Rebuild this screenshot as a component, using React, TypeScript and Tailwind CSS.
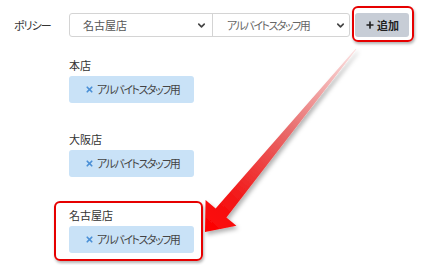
import { ChevronDown, Plus, X } from "lucide-react";

const FONT = "font-['Noto_Sans_CJK_JP','Noto_Sans',sans-serif] [font-feature-settings:'palt']";

function Tag({ label }: { label: string }) {
  return (
    <div className="flex h-[27px] w-[125px] items-center whitespace-nowrap rounded-[3px] bg-[#c9e2f7] pl-[16px] text-[11px] text-[#444]">
      <X className="mr-[3px] h-[9px] w-[9px] shrink-0 text-[#4a8fd6]" strokeWidth={4.5} />
      <span className="tracking-[-1.5px]">{label}</span>
    </div>
  );
}

function Section({ shop, mt }: { shop: string; mt: string }) {
  return (
    <div className={mt}>
      <div className="h-[16px] text-[11px] leading-[16px] text-[#333]">{shop}</div>
      <div className="mt-[3px]">
        <Tag label="アルバイトスタッフ用" />
      </div>
    </div>
  );
}

export default function App() {
  return (
    <div className={`relative h-[265px] w-[424px] overflow-hidden bg-white ${FONT}`}>
      <div className="flex items-center pl-[14px] pt-[13px]">
        <div className="w-[55px] text-[11px] tracking-[-1px] text-[#333]">ポリシー</div>
        <div className="flex h-[24px] w-[281px] rounded-[3px] border border-[#d4d4d4]">
          <div className="flex w-[143px] items-center justify-between border-r border-[#d4d4d4] pl-[13px] pr-[5px] text-[11px] text-[#555]">
            <span>名古屋店</span>
            <ChevronDown className="h-[11px] w-[11px] text-[#444]" strokeWidth={3.5} />
          </div>
          <div className="flex flex-1 items-center justify-between whitespace-nowrap pl-[14px] pr-[3px] text-[11px] text-[#666]">
            <span className="tracking-[-1.5px]">アルバイトスタッフ用</span>
            <ChevronDown className="h-[11px] w-[11px] text-[#444]" strokeWidth={3.5} />
          </div>
        </div>
        <button className="ml-[5px] flex h-[24px] w-[54px] items-center justify-center gap-[2px] rounded-[3px] bg-[#c7cdd6] text-[11px] font-bold text-[#222]">
          <Plus className="h-[10px] w-[10px]" strokeWidth={4} />
          <span>追加</span>
        </button>
      </div>

      <div className="pl-[69px]">
        <Section shop="本店" mt="mt-[20px]" />
        <Section shop="大阪店" mt="mt-[28px]" />
        <Section shop="名古屋店" mt="mt-[30px]" />
      </div>

      {/* annotations */}
      <div className="pointer-events-none absolute left-[352px] top-[6px] h-[36px] w-[62px] rounded-[6px] border-2 border-[#e60000] shadow-[1px_2px_3px_rgba(0,0,0,0.3)]" />
      <div className="pointer-events-none absolute left-[54px] top-[201px] h-[60px] w-[149px] rounded-[6px] border-2 border-[#e60000] shadow-[1px_2px_3px_rgba(0,0,0,0.3)]" />
      <svg className="pointer-events-none absolute left-0 top-0" width="424" height="265">
        <defs>
          <linearGradient id="ag" gradientUnits="userSpaceOnUse" x1="356" y1="49" x2="205" y2="232">
            <stop offset="0" stopColor="#fbe3e3" />
            <stop offset="0.45" stopColor="#e86a6a" />
            <stop offset="0.8" stopColor="#f21a1a" />
            <stop offset="1" stopColor="#ff0000" />
          </linearGradient>
          <filter id="sh" x="-20%" y="-20%" width="140%" height="140%">
            <feDropShadow dx="2" dy="3" stdDeviation="2" floodColor="#000" floodOpacity="0.3" />
          </filter>
        </defs>
        <polygon
          points="355.6,48.7 356.4,49.3 226.4,217.5 236.4,225.7 205,232 205.6,200 215.6,208.5"
          fill="url(#ag)"
          filter="url(#sh)"
        />
      </svg>
    </div>
  );
}
